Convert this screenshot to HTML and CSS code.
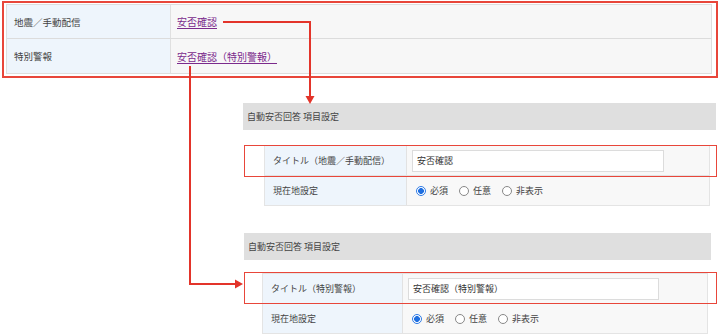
FILE: index.html
```html
<!DOCTYPE html>
<html lang="ja">
<head>
<meta charset="utf-8">
<link rel="stylesheet" href="styles.css">
</head>
<body>
<div class="page">
  <div class="top">
    <div class="ttable">
      <div class="trow">
        <div class="tlabel">地震／手動配信</div>
        <div class="tval"><a class="lnk" href="#">安否確認</a></div>
      </div>
      <div class="trow last">
        <div class="tlabel">特別警報</div>
        <div class="tval"><a class="lnk" href="#">安否確認（特別警報）</a></div>
      </div>
    </div>
  </div>

  <div class="sec sec1">
    <div class="sechead">自動安否回答 項目設定</div>
    <div class="ftable">
      <div class="frow">
        <div class="flabel">タイトル（地震／手動配信）</div>
        <div class="fval"><div class="inp">安否確認</div></div>
      </div>
      <div class="frow">
        <div class="flabel">現在地設定</div>
        <div class="fval radios">
          <span class="opt"><span class="radio on"></span>必須</span>
          <span class="opt"><span class="radio"></span>任意</span>
          <span class="opt"><span class="radio"></span>非表示</span>
        </div>
      </div>
    </div>
    <div class="mark"></div>
  </div>

  <div class="sec sec2">
    <div class="sechead">自動安否回答 項目設定</div>
    <div class="ftable">
      <div class="frow">
        <div class="flabel">タイトル（特別警報）</div>
        <div class="fval"><div class="inp">安否確認（特別警報）</div></div>
      </div>
      <div class="frow">
        <div class="flabel">現在地設定</div>
        <div class="fval radios">
          <span class="opt"><span class="radio on"></span>必須</span>
          <span class="opt"><span class="radio"></span>任意</span>
          <span class="opt"><span class="radio"></span>非表示</span>
        </div>
      </div>
    </div>
    <div class="mark"></div>
  </div>

  <svg class="arrows" width="720" height="336" viewBox="0 0 720 336">
    <polyline points="223,22 310,22 310,97" fill="none" stroke="#e3342a" stroke-width="2"/>
    <polygon points="305.5,96 314.5,96 310,104" fill="#e3342a"/>
    <polyline points="190,66 190,284 236,284" fill="none" stroke="#e3342a" stroke-width="2"/>
    <polygon points="235,279.5 235,288.5 243,284" fill="#e3342a"/>
  </svg>
</div>
</body>
</html>
```
FILE: styles.css
```css
* { box-sizing: border-box; }
html, body { margin: 0; padding: 0; background: #fff; }
body {
  font-family: "Noto Sans CJK JP", "Noto Sans", sans-serif;
  color: #444;
  width: 720px;
  height: 336px;
  overflow: hidden;
}
.page { position: relative; width: 720px; height: 336px; padding-top: 1px; }

/* top annotated table */
.top {
  margin: 0 2px 0 2px;
  width: 716px;
  height: 77px;
  border: 2px solid #e8463a;
  padding: 1px 4px 0 2px;
}
.ttable {
  border: 1px solid #dedede;
  background: #f7f7f7;
}
.trow { display: flex; height: 34px; border-bottom: 1px solid #dcdcdc; }
.trow.last { border-bottom: none; }
.tlabel {
  width: 164px;
  background: #eef5fc;
  border-right: 1px solid #e0e0e0;
  display: flex; align-items: center;
  padding-left: 7px;
  font-size: 9.5px;
  color: #444;
}
.tval { flex: 1; display: flex; align-items: center; padding-left: 6px; font-size: 10px; }
.lnk { color: #7b2a8c; text-decoration: underline; text-underline-offset: 2px; }

/* settings sections */
.sec { position: relative; }
.sec1 { margin: 25px 0 0 243px; width: 473px; }
.sec2 { margin: 27px 0 0 244px; width: 467px; }
.sechead {
  height: 27px;
  background: #dfdfdf;
  display: flex; align-items: center;
  padding-left: 4px;
  font-size: 9px;
  color: #444;
}
.ftable {
  border: 1px solid #e4e4e4;
  background: #f8f8f8;
}
.sec1 .ftable { margin: 15px 0 0 21px; width: 446px; }
.sec2 .ftable { margin: 13px 0 0 18px; width: 446px; }
.frow { display: flex; height: 30px; border-bottom: 1px solid #e2e2e2; }
.frow:last-child { border-bottom: none; height: 29px; }
.flabel {
  width: 142px;
  background: #eef5fc;
  border-right: 1px solid #e2e2e2;
  display: flex; align-items: center;
  padding-left: 8px;
  font-size: 9px;
}
.sec2 .flabel { width: 140px; }
.fval { flex: 1; display: flex; align-items: center; padding-left: 5px; }
.inp {
  width: 252px;
  height: 22px;
  background: #fff;
  border: 1px solid #dcdcdc;
  display: flex; align-items: center;
  padding-left: 4px;
  font-size: 9px;
  color: #333;
}
.sec2 .inp { width: 251px; }
.radios { padding-left: 9px; gap: 11px; font-size: 9px; }
.opt { display: flex; align-items: center; gap: 4px; }
.radio {
  width: 10px; height: 10px;
  border-radius: 50%;
  border: 1px solid #888;
  background: #fff;
  display: inline-block;
}
.radio.on {
  border-color: #2f7be6;
  background: radial-gradient(circle, #1f6fe0 0 2.6px, #fff 3.2px);
}

.mark {
  position: absolute;
  left: 1px;
  width: 473px;
  height: 32px;
  border: 1.5px solid #e8463a;
}
.sec1 .mark { top: 42px; }
.sec2 .mark { top: 39px; left: 0; width: 473px; }

.arrows { position: absolute; left: 0; top: 0; pointer-events: none; }
```
